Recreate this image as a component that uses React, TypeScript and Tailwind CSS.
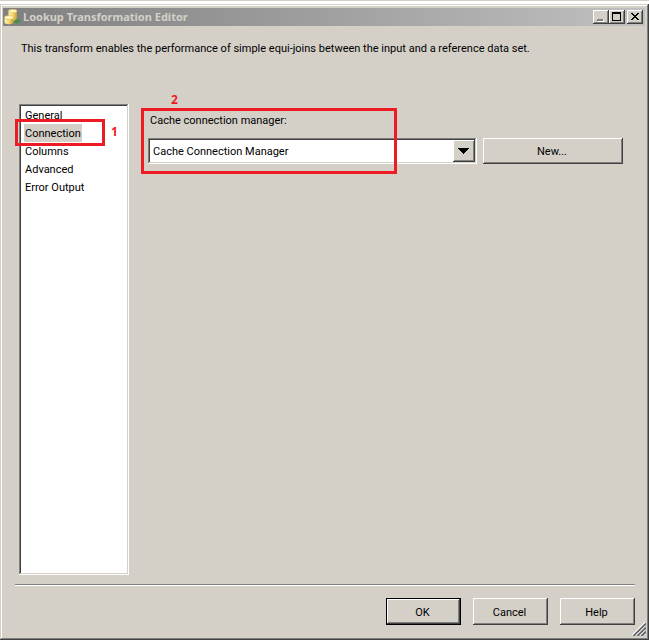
import { useState } from "react";
import type { ReactNode } from "react";

const pages = ["General", "Connection", "Columns", "Advanced", "Error Output"];

const raised =
  "bg-[#d4d0c8] shadow-[inset_-1px_-1px_#404040,inset_1px_1px_#ffffff,inset_-2px_-2px_#808080]";
const sunken =
  "bg-white shadow-[inset_-1px_-1px_#ffffff,inset_1px_1px_#808080,inset_-2px_-2px_#d4d0c8,inset_2px_2px_#404040]";

function CaptionButton({ label, children }: { label: string; children: ReactNode }) {
  return (
    <button type="button" aria-label={label} className={`h-3.5 w-4 ${raised}`}>
      <svg viewBox="0 0 16 14" className="block h-3.5 w-4" shapeRendering="crispEdges">
        {children}
      </svg>
    </button>
  );
}

function DialogButton({ children, primary = false }: { children: ReactNode; primary?: boolean }) {
  return (
    <button
      type="button"
      className={`h-[27px] w-[75px] pt-[2px] pr-[2px] ${raised} ${primary ? "border border-black" : ""}`}
    >
      {children}
    </button>
  );
}

function DatabaseIcon() {
  return (
    <svg viewBox="0 0 16 16" className="h-4 w-4 shrink-0" aria-hidden="true">
      <defs>
        <linearGradient id="gold" x1="0" x2="1">
          <stop offset="0" stopColor="#fff3a8" />
          <stop offset="0.5" stopColor="#f3db76" />
          <stop offset="1" stopColor="#c49a2c" />
        </linearGradient>
      </defs>
      <path d="M4.500 2v8.500c0 2 8.500 2 8.500 0V2z" fill="url(#gold)" />
      <ellipse cx="8.750" cy="2" rx="4.250" ry="1.800" fill="#fff2b3" stroke="#e0bd56" strokeWidth=".6" />
      <path d="M0.500 8.500v5c0 2.300 9 2.300 9 0v-5z" fill="url(#gold)" />
      <ellipse cx="5" cy="8.500" rx="4.500" ry="1.900" fill="#fff6c5" stroke="#d9b54e" strokeWidth=".6" />
      <path d="M9.500 12.500L13 9.500v2h1.500V10H16v3.500h-3V15z" fill="#3d9140" />
    </svg>
  );
}

export default function App() {
  const [page, setPage] = useState("Connection");

  return (
    <div className="flex min-h-screen flex-col bg-[#d4d0c8] pt-px font-[Roboto,sans-serif] text-[11px] leading-[18px] text-black">
      <div className="h-[3px] bg-white" />
      <main className="relative flex flex-1 flex-col pt-1 pr-1 pb-[2px] pl-[3px] shadow-[inset_-1px_-1px_#404040,inset_1px_1px_#d4d0c8,inset_-2px_-2px_#808080,inset_2px_2px_#ffffff]">
        <header className="flex h-[18px] items-center bg-linear-to-r from-[#808080] to-[#c0c0c0] pr-[2px] pl-px">
          <DatabaseIcon />
          <h1 className="ml-[3px] flex-1 font-['Noto_Sans',sans-serif] font-bold text-[#d4d0c8]">
            Lookup Transformation Editor
          </h1>
          <CaptionButton label="Minimize">
            <path d="M5 10h6v2H5z" fill="#fff" />
            <path d="M4 9h6v2H4z" fill="#808080" />
          </CaptionButton>
          <CaptionButton label="Maximize">
            <path d="M3 2h9v9H3zM4 4v6h7V4z" fill="#000" fillRule="evenodd" />
          </CaptionButton>
          <div className="w-[2px]" />
          <CaptionButton label="Close">
            <path
              d="M4 3h2v1h1v1h2V4h1V3h2v1h-1v1h-1v1H9v1h1v1h1v1h1v1h-2V9H9V8H7v1H6v1H4V9h1V8h1V7h1V6H6V5H5V4H4z"
              fill="#000"
            />
          </CaptionButton>
        </header>

        <p className="mt-3.5 ml-[18px]">
          This transform enables the performance of simple equi-joins between the input and a
          reference data set.
        </p>

        <div className="mt-[46px] flex flex-1 pr-[22px] pl-4">
          <nav aria-label="Pages" className={`relative w-[110px] shrink-0 p-[2px] ${sunken}`}>
            <ul>
              {pages.map((name) => (
                <li key={name} className="flex pl-[3px]">
                  <button
                    type="button"
                    onClick={() => setPage(name)}
                    aria-current={page === name ? "page" : undefined}
                    className={`h-[18px] px-px pt-px ${page === name ? "bg-[#d4d0c8]" : ""}`}
                  >
                    {name}
                  </button>
                </li>
              ))}
            </ul>
            <div className="pointer-events-none absolute top-[15px] left-[-4px] h-[27px] w-[90px] border-3 border-[#ed1c24]" />
            <b className="absolute top-[19px] left-[92px] font-['Noto_Sans',sans-serif] text-[12px] text-[#ed1c24]">
              1
            </b>
          </nav>

          <section className="relative ml-[19px] flex-1 pt-2">
            <label htmlFor="manager" className="block pl-[2px]">
              Cache connection manager:
            </label>
            <div className="mt-2 flex h-[26px] gap-1.5">
              <div className={`relative flex-1 p-[2px] ${sunken}`}>
                <select
                  id="manager"
                  className="h-full w-full appearance-none bg-transparent pt-[2px] pl-[3px] outline-none"
                >
                  <option>Cache Connection Manager</option>
                </select>
                <span
                  aria-hidden="true"
                  className={`pointer-events-none absolute top-[2px] right-[2px] flex h-[22px] w-[22px] items-center pl-[5px] ${raised}`}
                >
                  <svg viewBox="0 0 11 6" className="h-1.5 w-[11px]" shapeRendering="crispEdges">
                    <path d="M0 0h11v1h-1v1H9v1H8v1H7v1H6v1H5V5H4V4H3V3H2V2H1V1H0z" />
                  </svg>
                </span>
              </div>
              <button type="button" className={`w-[140px] pt-[2px] pr-[2px] ${raised}`}>
                New...
              </button>
            </div>
            <div className="pointer-events-none absolute top-1 left-[-7px] h-[66px] w-64 border-3 border-[#ed1c24]" />
            <b className="absolute top-[-13px] left-[23px] font-['Noto_Sans',sans-serif] text-[12px] text-[#ed1c24]">
              2
            </b>
          </section>
        </div>

        <footer className="mt-[9px] mr-2.5 ml-3 flex h-[54px] justify-end gap-3 border-t border-[#808080] pt-[13px] shadow-[inset_0_1px_#ffffff]">
          <DialogButton primary>OK</DialogButton>
          <DialogButton>Cancel</DialogButton>
          <DialogButton>Help</DialogButton>
        </footer>
        <svg
          viewBox="0 0 14 14"
          className="absolute right-[3px] bottom-1 h-3.5 w-3.5"
          aria-hidden="true"
        >
          <path d="M0 13L13 0M4 13l9-9M8 13l5-5" stroke="#fff" strokeWidth="1" />
          <path d="M1.500 14L14 1.500M5.500 14L14 5.500M9.500 14L14 9.500" stroke="#606068" strokeWidth="1.600" />
        </svg>
      </main>
    </div>
  );
}
